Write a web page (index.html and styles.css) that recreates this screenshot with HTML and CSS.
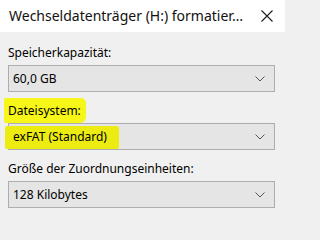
FILE: index.html
```html
<!DOCTYPE html>
<html lang="de">
<head>
<meta charset="utf-8">
<title>Formatieren</title>
<link rel="stylesheet" href="styles.css">
</head>
<body>
<div class="dialog">
  <div class="titlebar">
    <span class="title">Wechseldatenträger (H:) formatier…</span>
    <svg class="close" width="12" height="12" viewBox="0 0 12 12"><path d="M0.5 0.5 L11.5 11.5 M11.5 0.5 L0.5 11.5" stroke="#1a1a1a" stroke-width="1.1" fill="none"/></svg>
  </div>
  <div class="content">
    <div class="field">
      <div class="label">Speicherkapazität:</div>
      <div class="combo"><span class="value">60,0 GB</span><svg class="chev" width="10" height="6" viewBox="0 0 10 6"><path d="M0.5 0.5 L5 5 L9.5 0.5" stroke="#555" stroke-width="1" fill="none"/></svg></div>
    </div>
    <div class="field">
      <div class="label"><span class="hl hl-label">Dateisystem:</span></div>
      <div class="combo"><span class="value hl hl-value">exFAT (Standard)</span><svg class="chev" width="10" height="6" viewBox="0 0 10 6"><path d="M0.5 0.5 L5 5 L9.5 0.5" stroke="#555" stroke-width="1" fill="none"/></svg></div>
    </div>
    <div class="field">
      <div class="label">Größe der Zuordnungseinheiten:</div>
      <div class="combo"><span class="value">128 Kilobytes</span><svg class="chev" width="10" height="6" viewBox="0 0 10 6"><path d="M0.5 0.5 L5 5 L9.5 0.5" stroke="#555" stroke-width="1" fill="none"/></svg></div>
    </div>
  </div>
</div>
</body>
</html>
```
FILE: styles.css
```css
html {
  background: #f0f0f0;
}
html, body {
  margin: 0;
  padding: 0;
}
body {
  width: 285px;
  height: 227px;
  overflow: hidden;
  background: #f0f0f0;
  font-family: "Noto Sans", "Open Sans", "DejaVu Sans", sans-serif;
  color: #000;
}
.dialog {
  display: flex;
  flex-direction: column;
}
.titlebar {
  height: 32px;
  background: #fff;
  display: flex;
  align-items: center;
  justify-content: space-between;
  padding: 0 12px 0 9px;
  box-sizing: border-box;
}
.title {
  font-size: 14px;
  line-height: 20px;
  padding-bottom: 1px;
  color: #111;
}
.close {
  display: block;
}
.content {
  padding: 13px 10px 0 8px;
  display: flex;
  flex-direction: column;
  gap: 11px;
}
.field {
  display: flex;
  flex-direction: column;
  gap: 4px;
}
.label {
  font-size: 12px;
  line-height: 16px;
}
.combo {
  height: 27px;
  box-sizing: border-box;
  background: #e5e5e5;
  border: 1px solid #adadad;
  display: flex;
  align-items: center;
  justify-content: space-between;
  padding: 0 9px 0 4px;
  font-size: 12px;
}
.value {
  line-height: 16px;
}
.chev {
  display: block;
}
.hl {
  background: #f6f618;
}
.hl-label {
  display: inline-block;
  padding: 5px 5px 4px 4px;
  margin: -5px -5px -4px -4px;
  border-radius: 2px 5px 6px 2px;
}
.hl-value {
  display: inline-block;
  background: #ecec12;
  padding: 3px 12px 4px 8px;
  margin: -3px -12px -4px -8px;
  border-radius: 2px 3px 2px 2px;
}
```
